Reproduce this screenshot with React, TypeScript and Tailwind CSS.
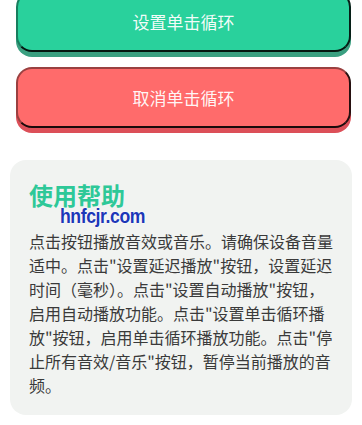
import React from 'react';

const cjk = { fontFamily: '"Noto Sans CJK SC", "Noto Sans", sans-serif' };

type ActionButtonProps = {
  label: string;
  tone: 'green' | 'red';
};

const ActionButton = ({ label, tone }: ActionButtonProps) => {
  const colors =
    tone === 'green'
      ? 'bg-[#29d19c] shadow-[0_5px_0_#3a9f80]'
      : 'bg-[#ff6b6b] shadow-[0_5px_0_#dc4f58]';
  return (
    <button
      className={`${colors} h-[61px] w-full rounded-[16px] border-2 border-black/40 border-b-black/90 border-r-black/85 text-[17px] text-white/95`}
      style={cjk}
    >
      {label}
    </button>
  );
};

export default function App() {
  return (
    <div className="relative min-h-[425px] w-[362px] overflow-hidden bg-white" style={cjk}>
      <div className="-mt-[9px] flex flex-col gap-[15px] pl-[16px] pr-[11px]">
        <ActionButton label="设置单击循环" tone="green" />
        <ActionButton label="取消单击循环" tone="red" />
      </div>

      <div className="mx-[10px] mt-[32px] rounded-[16px] bg-[#f1f3f1] px-[19px] pb-[18px] pt-[17px]">
        <h2 className="text-[24px] font-bold leading-[36px] text-[#2ec898]">使用帮助</h2>
        <p className="mt-4 text-[16px] leading-[24px] text-[#3a3a3a]">
          点击按钮播放音效或音乐。请确保设备音量适中。点击"设置延迟播放"按钮，设置延迟时间（毫秒）。点击"设置自动播放"按钮，启用自动播放功能。点击"设置单击循环播放"按钮，启用单击循环播放功能。点击"停止所有音效/音乐"按钮，暂停当前播放的音频。
        </p>
      </div>

      <span
        className="absolute left-[60px] top-[200px] origin-left scale-x-[0.84] text-[21px] font-bold tracking-[-0.5px] text-[#1c37b8] [text-shadow:0_0_2px_#fff,0_0_2px_#fff]"
        style={{ fontFamily: '"Liberation Sans", Arial, sans-serif' }}
      >
        hnfcjr.com
      </span>
    </div>
  );
}
